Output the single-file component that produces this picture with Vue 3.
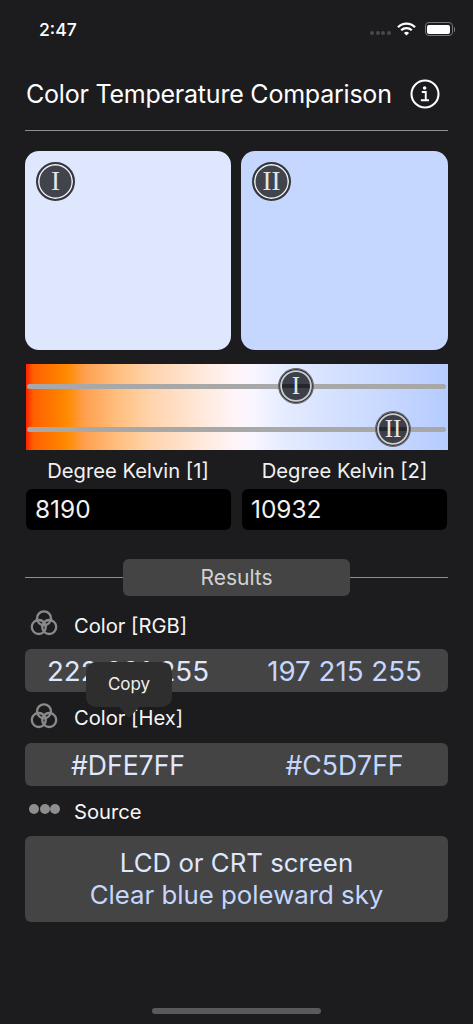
<script setup>
const results = [
  { key: 'rgb', label: 'Color [RGB]', a: '222 231 255', b: '197 215 255' },
  { key: 'hex', label: 'Color [Hex]', a: '#DFE7FF', b: '#C5D7FF' },
]
</script>

<template>
  <div class="page">
    <header class="status">
      <span class="time">2:47</span>
      <div class="status-icons">
        <span class="signal"><i></i><i></i><i></i><i></i></span>
        <svg class="wifi" width="19" height="14" viewBox="0 0 19 14">
          <path d="M1 5.2a12 12 0 0 1 17 0" fill="none" stroke="#fff" stroke-width="2.3" />
          <path d="M4.2 8.3a7.6 7.6 0 0 1 10.6 0" fill="none" stroke="#fff" stroke-width="2.3" />
          <path d="M9.5 13.6 6.9 11a3.7 3.7 0 0 1 5.2 0z" fill="#fff" />
        </svg>
        <span class="battery"><span class="battery-fill"></span></span>
        <span class="battery-cap"></span>
      </div>
    </header>

    <div class="title-row">
      <h1>Color Temperature Comparison</h1>
      <svg class="info" width="30" height="30" viewBox="0 0 32 32">
        <circle cx="16" cy="16" r="14.4" fill="none" stroke="#fff" stroke-width="2.2" />
        <circle cx="15.6" cy="9.6" r="1.9" fill="#fff" />
        <path d="M12.6 13.9h4.2v8.2M11.6 22.6h8.6" fill="none" stroke="#fff" stroke-width="2" />
      </svg>
    </div>
    <div class="rule"></div>

    <div class="swatches">
      <div class="swatch one"><span class="badge">I</span></div>
      <div class="swatch two"><span class="badge">II</span></div>
    </div>

    <div class="gradient">
      <div class="track"><span class="thumb first">I</span></div>
      <div class="track"><span class="thumb second">II</span></div>
    </div>

    <div class="pair labels">
      <span>Degree Kelvin [1]</span>
      <span>Degree Kelvin [2]</span>
    </div>
    <div class="pair inputs">
      <div class="input">8190</div>
      <div class="input">10932</div>
    </div>

    <div class="results-head">
      <span class="line"></span>
      <span class="results-btn">Results</span>
      <span class="line"></span>
    </div>

    <div class="results">
      <template v-for="row in results" :key="row.key">
        <div class="row-label" :class="row.key">
          <svg class="rings" width="30" height="28" viewBox="0 0 30 28">
            <g fill="none" stroke="#8a8a8a" stroke-width="2.3">
              <circle cx="15" cy="9.3" r="7" />
              <circle cx="9.8" cy="18" r="7" />
              <circle cx="20.2" cy="18" r="7" />
            </g>
          </svg>
          <span class="row-text">{{ row.label }}</span>
        </div>
        <div class="pair value" :class="row.key">
          <span class="light">{{ row.a }}</span>
          <span class="blue">{{ row.b }}</span>
        </div>
      </template>

      <div class="row-label src">
        <span class="dots"><i></i><i></i><i></i></span>
        <span class="row-text">Source</span>
      </div>
      <div class="source">
        <span class="light">LCD or CRT screen</span>
        <span class="blue">Clear blue poleward sky</span>
      </div>

      <div class="tooltip">Copy</div>
    </div>

    <div class="home"></div>
  </div>
</template>

<style scoped>
.page {
  position: relative;
  width: 473px;
  height: 1024px;
  box-sizing: border-box;
  padding: 0 25px;
  background: #1c1c1e;
  color: #fff;
  font-family: Inter, "Liberation Sans", sans-serif;
  overflow: hidden;
  display: flex;
  flex-direction: column;
}
.status {
  height: 58px;
  flex: none;
  display: flex;
  align-items: center;
  justify-content: space-between;
  padding-left: 14px;
}
.time {
  font-size: 17.6px;
  font-weight: 500;
}
.status-icons {
  display: flex;
  align-items: center;
  margin-right: -7px;
}
.signal {
  display: flex;
  gap: 1.5px;
  margin-top: 8px;
  margin-right: 6px;
}
.signal i {
  width: 4px;
  height: 4px;
  border-radius: 50%;
  background: #48484a;
}
.wifi {
  margin-right: 9px;
}
.battery {
  width: 28px;
  height: 14px;
  box-sizing: border-box;
  border: 1px solid #77777a;
  border-radius: 4px;
  padding: 1.5px;
  display: flex;
}
.battery-fill {
  flex: 1;
  background: #fff;
  border-radius: 2px;
}
.battery-cap {
  width: 1.5px;
  height: 5px;
  margin-left: 1px;
  background: #77777a;
  border-radius: 0 1px 1px 0;
}
.title-row {
  height: 72px;
  flex: none;
  display: flex;
  align-items: center;
  justify-content: space-between;
  padding: 0 8px 0 1px;
}
h1 {
  margin: 0;
  font-size: 25px;
  font-weight: 400;
  letter-spacing: -0.22px;
  white-space: nowrap;
}
.rule,
.line {
  height: 1px;
  background: #8e8e8e;
}
.rule {
  flex: none;
}
.swatches,
.pair {
  display: grid;
  grid-template-columns: 206px 207px;
  gap: 10px;
}
.swatches {
  margin-top: 20px;
}
.swatch {
  height: 199px;
  border-radius: 14px;
  padding: 11px;
  box-sizing: border-box;
}
.swatch.one {
  background: #dfe7ff;
}
.swatch.two {
  background: #c5d7ff;
}
.badge,
.thumb {
  display: flex;
  align-items: center;
  justify-content: center;
  box-sizing: border-box;
  border-radius: 50%;
  color: #e6e6e6;
  font-family: "Liberation Serif", serif;
}
.badge {
  width: 39px;
  height: 39px;
  background: #41444c;
  border: 2.6px solid #363840;
  box-shadow: inset 0 0 0 1.5px #f2f2f2;
  font-size: 27px;
}
.gradient {
  margin: 14px 0 0 1px;
  height: 86px;
  padding: 20px 1px 0;
  box-sizing: border-box;
  display: flex;
  flex-direction: column;
  gap: 38.5px;
  background: linear-gradient(
    90deg,
    #ff2000 0,
    #ff6000 1.7%,
    #ff8a00 9.7%,
    #ffa050 14%,
    #ffc080 22%,
    #ffd2aa 29%,
    #ffe8d8 41%,
    #fff5fb 50%,
    #f8f6ff 54%,
    #e8edff 60%,
    #d6e2ff 72%,
    #c2d4ff 90%,
    #b5ccff 100%
  );
}
.track {
  position: relative;
  height: 4.5px;
  margin-right: 1px;
  border-radius: 3px;
  background: #a8a8a8;
}
.thumb {
  position: absolute;
  top: 50%;
  width: 36px;
  height: 36px;
  transform: translate(-50%, -50%);
  background:
    linear-gradient(transparent 43%, #24262c 43%, #24262c 57%, transparent 57%),
    #3d4049;
  border: 1.5px solid #6c6e74;
  box-shadow: inset 0 0 0 1.2px #33353c, inset 0 0 0 3px #cdcdcd;
  font-size: 25px;
}
.thumb.first {
  left: 269px;
}
.thumb.second {
  left: 366px;
}
.labels {
  margin-top: 8px;
  height: 24px;
  align-items: center;
  text-align: center;
  font-size: 20.2px;
  color: #f2f2f2;
  white-space: nowrap;
}
.inputs {
  margin-top: 7px;
  padding-left: 1px;
  grid-template-columns: 205px 205px;
  gap: 11px;
}
.input {
  height: 41px;
  line-height: 41px;
  padding-left: 9px;
  background: #000;
  border-radius: 6px;
  font-size: 24.4px;
  color: #f2f2f2;
}
.results-head {
  margin-top: 29px;
  height: 37px;
  flex: none;
  display: flex;
  align-items: center;
}
.line {
  flex: 1;
}
.results-btn {
  width: 227px;
  height: 37px;
  line-height: 38px;
  text-align: center;
  border-radius: 6px;
  background: #444;
  color: #d2d2d2;
  font-size: 21px;
}
.results {
  position: relative;
  display: flex;
  flex-direction: column;
}
.row-label {
  flex: none;
  display: flex;
  align-items: center;
  padding-left: 4px;
  font-size: 20.2px;
  color: #f6f6f6;
}
.row-label.rgb {
  height: 53px;
}
.row-label.rgb .row-text {
  padding-top: 5px;
}
.row-label.hex {
  height: 51px;
}
.row-label.hex .rings {
  margin-top: -3px;
}
.row-label.src {
  height: 50px;
}
.rings {
  width: 30px;
  margin-right: 15px;
}
.dots {
  width: 31px;
  margin-right: 14px;
  margin-top: -4px;
  display: flex;
  gap: 0.5px;
}
.dots i {
  width: 10px;
  height: 10px;
  border-radius: 50%;
  background: #8e8e8e;
}
.value {
  height: 43px;
  flex: none;
  align-items: center;
  text-align: center;
  background: #444;
  border-radius: 6px;
  font-size: 27.7px;
  white-space: nowrap;
}
.value.hex {
  font-size: 26.6px;
}
.light {
  color: #dfe7ff;
}
.blue {
  color: #c5d7ff;
}
.source {
  height: 86px;
  display: flex;
  flex-direction: column;
  align-items: center;
  justify-content: center;
  background: #444;
  border-radius: 6px;
  font-size: 25.8px;
  line-height: 32px;
}
.tooltip {
  position: absolute;
  left: 61px;
  top: 66px;
  width: 86px;
  height: 45px;
  line-height: 45px;
  text-align: center;
  background: #2e2e2e;
  border-radius: 10px;
  font-size: 17px;
  color: #f0f0f0;
}
.tooltip::after {
  content: "";
  position: absolute;
  left: 33px;
  top: 45px;
  border-left: 10px solid transparent;
  border-right: 10px solid transparent;
  border-top: 11px solid #2e2e2e;
}
.home {
  position: absolute;
  left: 152px;
  top: 1008px;
  width: 169px;
  height: 6px;
  border-radius: 3px;
  background: #5a5a5c;
}
</style>

<style>
body {
  background: #1c1c1e;
}
</style>
